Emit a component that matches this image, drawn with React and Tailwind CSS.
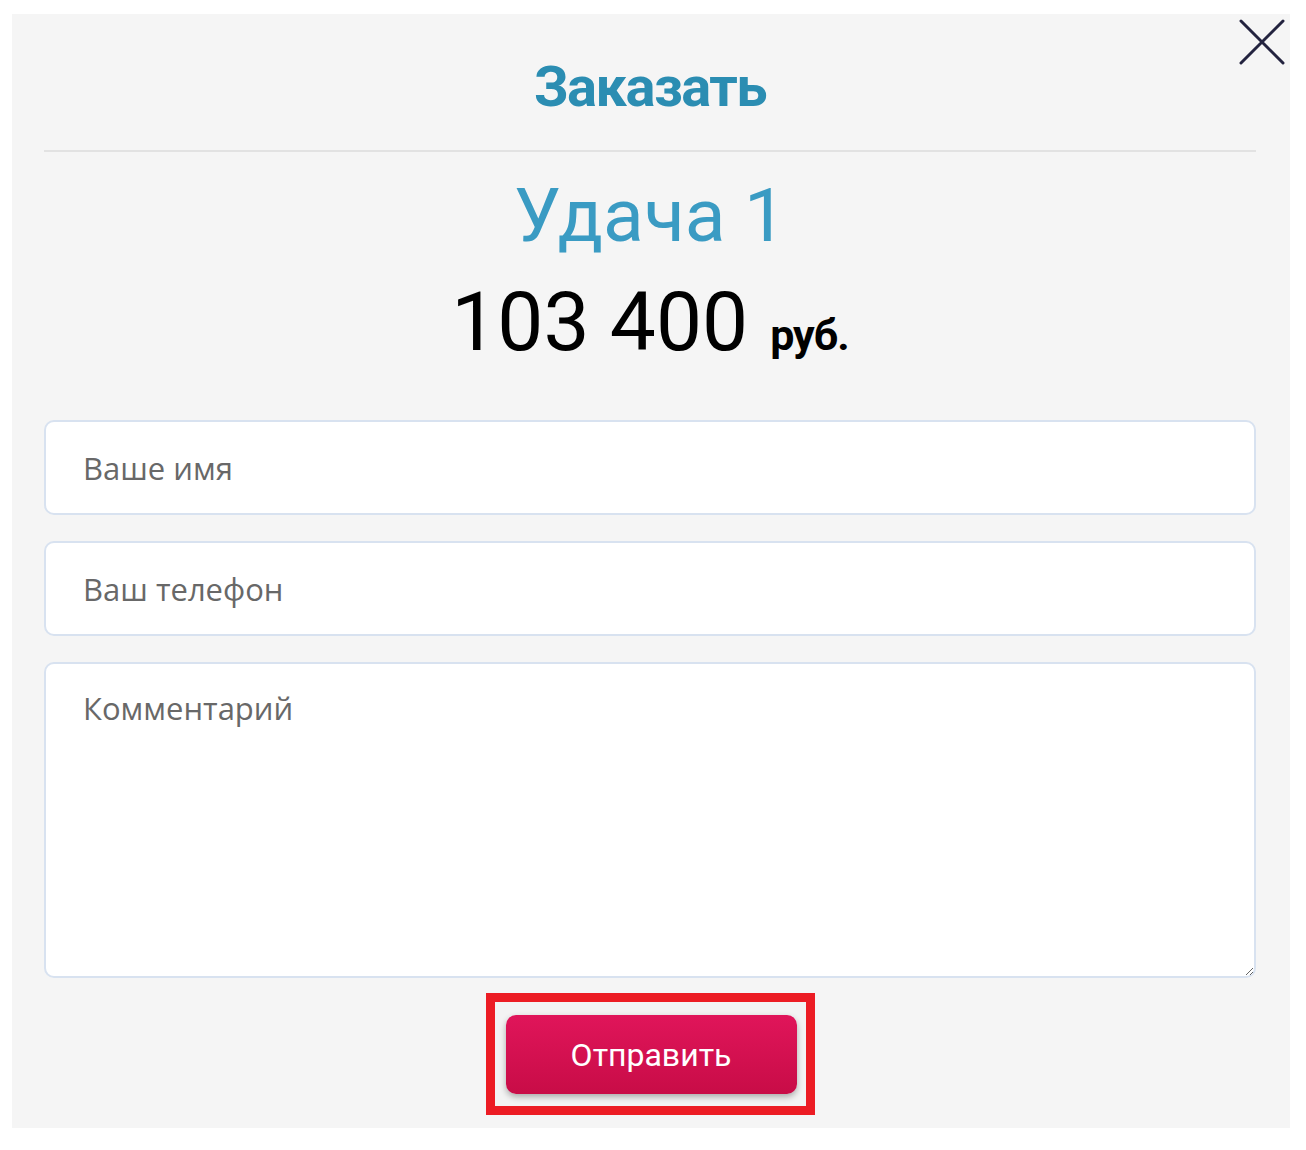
import React from 'react';

const fields = [
  { id: 'name', placeholder: 'Ваше имя' },
  { id: 'phone', placeholder: 'Ваш телефон' },
];

function CloseIcon() {
  return (
    <svg width="46" height="46" viewBox="0 0 46 46" fill="none">
      <path d="M2 2L44 44M44 2L2 44" stroke="#23233f" strokeWidth="3" strokeLinecap="round" />
    </svg>
  );
}

export default function App() {
  return (
    <div className="min-h-[1150px] bg-white pt-[14px] pl-[12px]" style={{ fontFamily: 'Roboto, "Open Sans", sans-serif' }}>
      <div className="relative w-[1278px] h-[1114px] bg-[#f5f5f5] pl-[32px] pr-[34px]">
        <button className="absolute top-[5px] right-[5px]">
          <CloseIcon />
        </button>

        <h2 className="pt-[39px] text-center text-[56px] leading-[68px] font-bold tracking-[-1.5px] text-[#2b8db2]">
          Заказать
        </h2>
        <div className="mt-[29px] h-[2px] bg-[#e2e2e2]" />

        <div className="mt-[19px] text-center text-[75px] leading-[88px] text-[#3a9bc3]">Удача 1</div>
        <div className="mt-[15px] flex h-[96px] items-baseline justify-center text-black">
          <span className="text-[82px] leading-[96px]">103 400</span>
          <span className="ml-[22px] text-[43px] leading-[96px] font-bold tracking-[-1px]">руб.</span>
        </div>

        <form className="mt-[50px] flex flex-col gap-[26px]" style={{ fontFamily: '"Open Sans", sans-serif' }}>
          {fields.map((f) => (
            <input
              key={f.id}
              type="text"
              placeholder={f.placeholder}
              className="h-[95px] w-full rounded-[10px] border-2 border-[#d8e2f0] bg-white px-[37px] text-[31px] outline-none placeholder:text-[#686868]"
            />
          ))}
          <textarea
            placeholder="Комментарий"
            className="h-[316px] w-full rounded-[10px] border-2 border-[#d8e2f0] bg-white px-[37px] pt-[24px] text-[31px] leading-[40px] outline-none placeholder:text-[#686868]"
          />
        </form>

        <div className="mt-[15px] flex justify-center">
          <div className="border-[9px] border-[#ec1c24] bg-[#f3f3f3] pt-[13px] pb-[12px] pl-[11px] pr-[9px]">
            <button
              type="button"
              className="flex h-[79px] w-[291px] items-center justify-center rounded-[10px] bg-gradient-to-b from-[#e0155a] to-[#c80c47] text-[32px] text-white shadow-[0_3px_6px_rgba(0,0,0,0.3)]"
            >
              Отправить
            </button>
          </div>
        </div>
      </div>
    </div>
  );
}
